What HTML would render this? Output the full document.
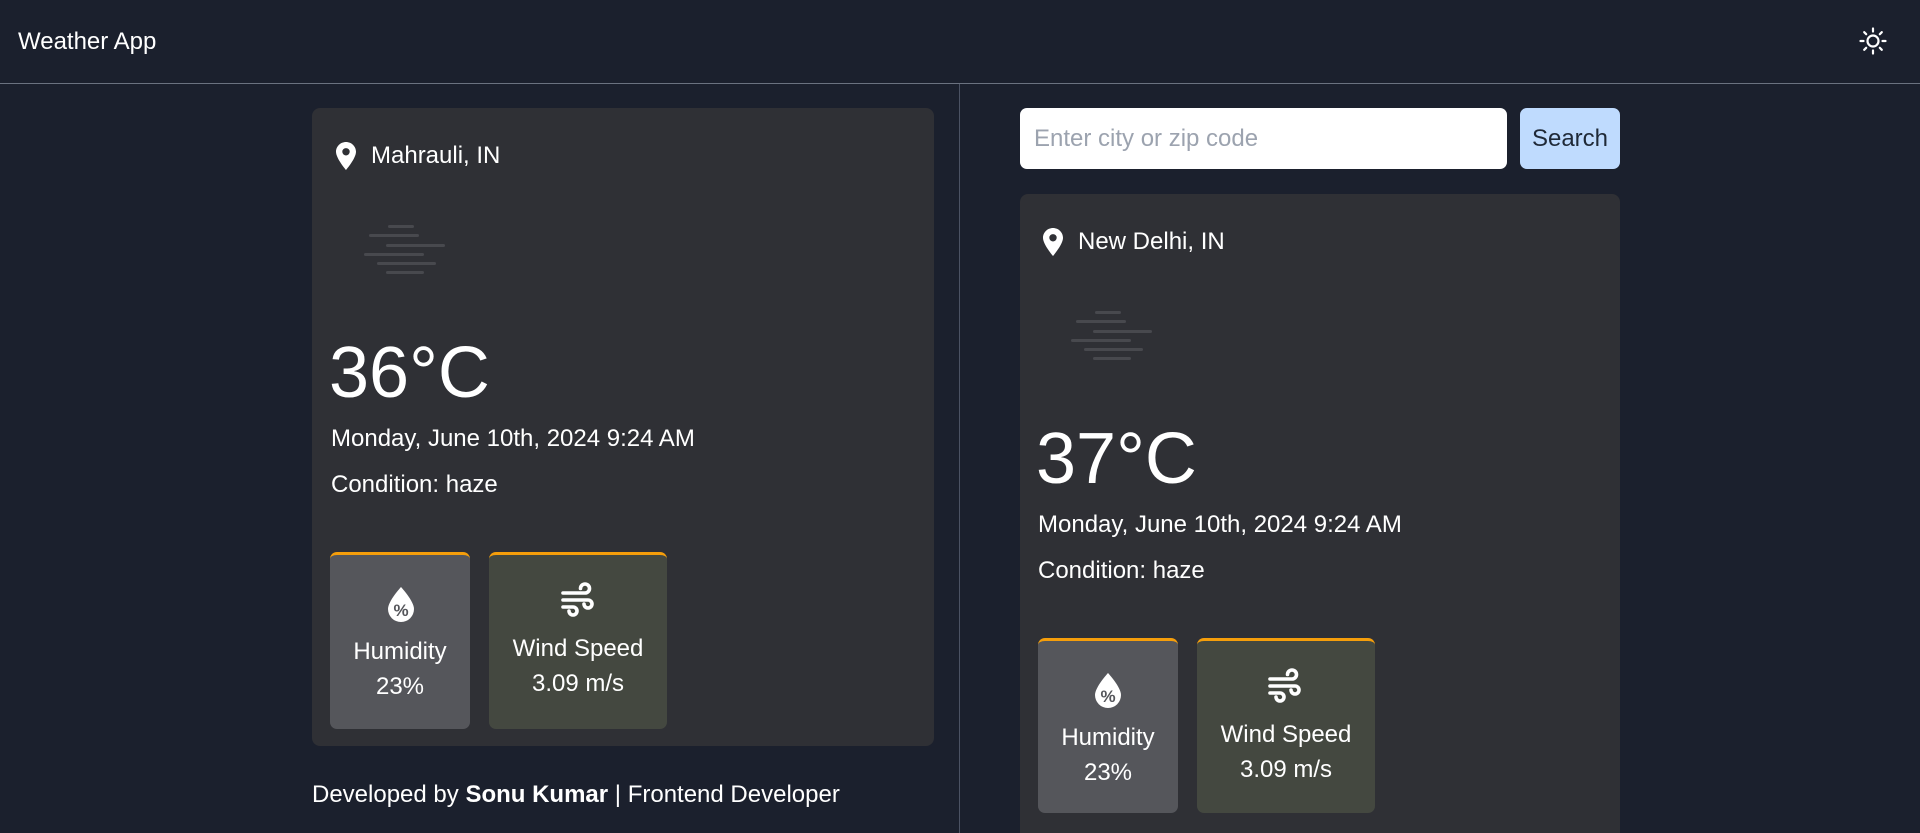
<!DOCTYPE html>
<html><head><meta charset="utf-8"><style>
*{margin:0;padding:0;box-sizing:border-box}
html,body{width:1920px;height:833px;overflow:hidden}
body{background:#1b202d;font-family:"Liberation Sans",Arial,sans-serif;color:#fff;position:relative}
.a{position:absolute;white-space:nowrap;line-height:1}
.card{position:absolute;background:#2f3035;border-radius:8px}
.sc{position:absolute;border-radius:7px;border-top:3px solid #f59e0b;text-align:center}
.hz{position:absolute;height:3px;background:#48494e;border-radius:2px}
</style></head><body>
<div class="a" style="left:18px;top:30px;font-size:24px">Weather App</div>
<svg class="a" style="left:1857px;top:25px" width="32" height="32" viewBox="0 0 32 32" fill="none" stroke="#fff" stroke-width="2.2" stroke-linecap="round">
<circle cx="16" cy="16" r="5.5"/>
<path d="M16 3.5v3M16 25.5v3M3.5 16h3M25.5 16h3M7.2 7.2l2 2M22.8 22.8l2 2M7.2 24.8l2-2M22.8 9.2l2-2"/></svg>
<div style="position:absolute;left:0;top:83px;width:1920px;height:1px;background:#6b7280"></div>
<div style="position:absolute;left:959px;top:84px;width:1px;height:749px;background:#4b5263"></div>

<div class="card" style="left:312px;top:108px;width:622px;height:638px"></div>
<svg class="a" style="left:336px;top:142px" width="20" height="28" viewBox="0 0 20 28"><path d="M10 0C4.5 0 0 4.4 0 9.8 0 16.5 10 28 10 28s10-11.5 10-18.2C20 4.4 15.5 0 10 0zm0 13.5a3.7 3.7 0 110-7.4 3.7 3.7 0 010 7.4z" fill="#fff"/></svg>
<div class="a" style="left:371px;top:144px;font-size:24px">Mahrauli, IN</div>
<div class="hz" style="left:388px;top:225px;width:26px"></div>
<div class="hz" style="left:369px;top:234px;width:50px"></div>
<div class="hz" style="left:386px;top:244px;width:59px"></div>
<div class="hz" style="left:364px;top:253px;width:60px"></div>
<div class="hz" style="left:377px;top:262px;width:59px"></div>
<div class="hz" style="left:386px;top:271px;width:38px"></div>
<div class="a" style="left:329px;top:337px;font-size:72px">36°C</div>
<div class="a" style="left:331px;top:427px;font-size:24px">Monday, June 10th, 2024 9:24 AM</div>
<div class="a" style="left:331px;top:473px;font-size:24px">Condition: haze</div>

<div class="sc" style="left:330px;top:552px;width:140px;height:177px;background:#55565b"></div>
<svg class="a" style="left:388px;top:587px" width="26" height="35" viewBox="0 0 26 35"><path d="M13 0C13 0 0 14 0 22a13 13 0 0026 0C26 14 13 0 13 0z" fill="#fff"/><text x="13" y="29" font-family="Liberation Sans" font-weight="bold" font-size="17" text-anchor="middle" fill="#55565b">%</text></svg>
<div class="a" style="left:330px;top:640px;width:140px;text-align:center;font-size:24px">Humidity</div>
<div class="a" style="left:330px;top:675px;width:140px;text-align:center;font-size:24px">23%</div>

<div class="sc" style="left:489px;top:552px;width:178px;height:177px;background:#444840"></div>
<svg class="a" style="left:561px;top:581px" width="33" height="38" viewBox="0 0 33 38" fill="none" stroke="#fff" stroke-width="3.6" stroke-linecap="round"><path d="M2 12h22a4.5 4.5 0 10-4.5-4.5"/><path d="M2 19h25a4 4 0 11-4 4"/><path d="M2 26h10a4 4 0 11-4 4"/></svg>
<div class="a" style="left:489px;top:637px;width:178px;text-align:center;font-size:24px">Wind Speed</div>
<div class="a" style="left:489px;top:672px;width:178px;text-align:center;font-size:24px">3.09 m/s</div>

<div class="a" style="left:312px;top:783px;font-size:24px">Developed by <b>Sonu Kumar</b> | Frontend Developer</div>

<div style="position:absolute;left:1020px;top:108px;width:487px;height:61px;background:#fff;border-radius:7px"></div>
<div class="a" style="left:1034px;top:127px;font-size:24px;color:#9ca3af">Enter city or zip code</div>
<div style="position:absolute;left:1520px;top:108px;width:100px;height:61px;background:#bfdbfe;border-radius:7px"></div>
<div class="a" style="left:1520px;top:127px;width:100px;text-align:center;font-size:24px;color:#1f2937">Search</div>

<div class="card" style="left:1020px;top:194px;width:600px;height:639px;border-radius:8px 8px 0 0"></div>
<svg class="a" style="left:1043px;top:228px" width="20" height="28" viewBox="0 0 20 28"><path d="M10 0C4.5 0 0 4.4 0 9.8 0 16.5 10 28 10 28s10-11.5 10-18.2C20 4.4 15.5 0 10 0zm0 13.5a3.7 3.7 0 110-7.4 3.7 3.7 0 010 7.4z" fill="#fff"/></svg>
<div class="a" style="left:1078px;top:230px;font-size:24px">New Delhi, IN</div>
<div class="hz" style="left:1095px;top:311px;width:26px"></div>
<div class="hz" style="left:1076px;top:320px;width:50px"></div>
<div class="hz" style="left:1093px;top:330px;width:59px"></div>
<div class="hz" style="left:1071px;top:339px;width:60px"></div>
<div class="hz" style="left:1084px;top:348px;width:59px"></div>
<div class="hz" style="left:1093px;top:357px;width:38px"></div>
<div class="a" style="left:1036px;top:423px;font-size:72px">37°C</div>
<div class="a" style="left:1038px;top:513px;font-size:24px">Monday, June 10th, 2024 9:24 AM</div>
<div class="a" style="left:1038px;top:559px;font-size:24px">Condition: haze</div>

<div class="sc" style="left:1038px;top:638px;width:140px;height:175px;background:#55565b"></div>
<svg class="a" style="left:1095px;top:673px" width="26" height="35" viewBox="0 0 26 35"><path d="M13 0C13 0 0 14 0 22a13 13 0 0026 0C26 14 13 0 13 0z" fill="#fff"/><text x="13" y="29" font-family="Liberation Sans" font-weight="bold" font-size="17" text-anchor="middle" fill="#55565b">%</text></svg>
<div class="a" style="left:1038px;top:726px;width:140px;text-align:center;font-size:24px">Humidity</div>
<div class="a" style="left:1038px;top:761px;width:140px;text-align:center;font-size:24px">23%</div>

<div class="sc" style="left:1197px;top:638px;width:178px;height:175px;background:#444840"></div>
<svg class="a" style="left:1268px;top:667px" width="33" height="38" viewBox="0 0 33 38" fill="none" stroke="#fff" stroke-width="3.6" stroke-linecap="round"><path d="M2 12h22a4.5 4.5 0 10-4.5-4.5"/><path d="M2 19h25a4 4 0 11-4 4"/><path d="M2 26h10a4 4 0 11-4 4"/></svg>
<div class="a" style="left:1197px;top:723px;width:178px;text-align:center;font-size:24px">Wind Speed</div>
<div class="a" style="left:1197px;top:758px;width:178px;text-align:center;font-size:24px">3.09 m/s</div>
</body></html>
